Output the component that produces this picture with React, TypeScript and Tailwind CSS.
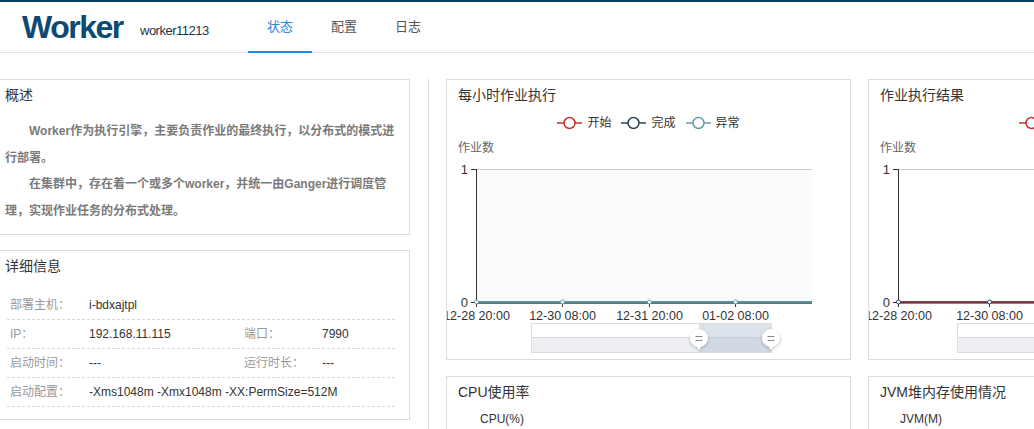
import React from 'react';

type Series = { color: string; width: number; dy?: number };

interface TrendChartProps {
  width: number;
  plotRight: number;
  ticks: { x: number; label: string }[];
  series: Series[];
  markerStroke: string;
  slider: { x1: number; x2: number; sel: number };
  shaded?: boolean;
  id: string;
}

// echarts-like line chart, drawn flat
function TrendChart({ width, plotRight, ticks, series, markerStroke, slider, shaded, id }: TrendChartProps) {
  const top = 13;
  const base = 146;
  return (
    <svg width={width} height={202} className="block overflow-hidden" style={{ fontFamily: 'Liberation Sans, Noto Sans CJK SC, sans-serif' }}>
      <defs>
        <filter id={`${id}-sh`} x="-50%" y="-50%" width="200%" height="200%">
          <feDropShadow dx="0" dy="1" stdDeviation="1.4" floodColor="#000" floodOpacity="0.3" />
        </filter>
      </defs>
      {shaded && <rect x={29} y={top} width={plotRight - 29} height={base - top} fill="#fbfbfb" />}
      <line x1={29} y1={top + 0.5} x2={plotRight} y2={top + 0.5} stroke="#ccc" />
      <line x1={29.5} y1={top} x2={29.5} y2={base} stroke="#333" />
      <line x1={24} y1={top + 0.5} x2={29} y2={top + 0.5} stroke="#333" />
      <line x1={24} y1={base + 0.5} x2={29} y2={base + 0.5} stroke="#333" />
      <text x={21} y={17.5} fontSize={13} textAnchor="end" fill="#333">1</text>
      <text x={21} y={150.5} fontSize={13} textAnchor="end" fill="#333">0</text>
      <line x1={29} y1={base + 0.5} x2={plotRight} y2={base + 0.5} stroke="#333" />
      {series.map((s, i) => (
        <line key={i} x1={29} y1={base + (s.dy ?? 0)} x2={plotRight} y2={base + (s.dy ?? 0)} stroke={s.color} strokeWidth={s.width} />
      ))}
      {ticks.map((t) => (
        <g key={t.label}>
          <line x1={t.x + 0.5} y1={base} x2={t.x + 0.5} y2={base + 5} stroke="#333" />
          <circle cx={t.x + 0.5} cy={base} r={2} fill="#fff" stroke={markerStroke} strokeWidth={1} />
          <text x={t.x + 0.5} y={163.5} fontSize={12.5} textAnchor="middle" fill="#333">{t.label}</text>
        </g>
      ))}
      {/* data zoom slider */}
      <rect x={slider.x1 + 0.5} y={167.5} width={slider.x2 - slider.x1} height={14} fill="#fff" />
      <rect x={slider.x1 + 0.5} y={181.5} width={slider.x2 - slider.x1} height={15} fill="#eceef1" />
      <line x1={slider.x1} y1={181.5} x2={slider.x2} y2={181.5} stroke="#d8dce2" />
      <rect x={slider.sel} y={167.5} width={slider.x2 - slider.sel} height={29} fill="#a7b7cc" fillOpacity={0.4} />
      <rect x={slider.x1 + 0.5} y={167.5} width={slider.x2 - slider.x1} height={29} fill="none" stroke="#ddd" />
      {[slider.sel, slider.x2].map((hx) => (
        <g key={hx}>
          <path d={`M${hx - 9} 182 a9 9 0 1 1 18 0 a9 9 0 0 1 -7 8.7 l-2 3.3 l-2 -3.3 a9 9 0 0 1 -7 -8.7 z`} fill="#fff" filter={`url(#${id}-sh)`} />
          <line x1={hx - 3.5} y1={180.5} x2={hx + 3.5} y2={180.5} stroke="#8a8a8a" />
          <line x1={hx - 3.5} y1={184.5} x2={hx + 3.5} y2={184.5} stroke="#8a8a8a" />
        </g>
      ))}
    </svg>
  );
}

function LegendItem({ color, label }: { color: string; label: string }) {
  return (
    <div className="flex items-center">
      <svg width={25} height={14} className="block">
        <line x1={0} y1={7} x2={25} y2={7} stroke={color} strokeWidth={1.5} />
        <circle cx={12.5} cy={7} r={5.5} fill="#fff" stroke={color} strokeWidth={1.5} />
      </svg>
      <span className="ml-[5px] text-[12px] text-[#333]">{label}</span>
    </div>
  );
}

function Panel({ title, className, children }: { title: string; className?: string; children?: React.ReactNode }) {
  return (
    <div className={`border border-[#dcdcdc] bg-white px-[11px] pt-[5px] overflow-hidden shrink-0 ${className ?? ''}`}>
      <div className="text-[14px] leading-[20px] text-[#333]">{title}</div>
      {children}
    </div>
  );
}

const details: [string, string, string?, string?][] = [
  ['部署主机：', 'i-bdxajtpl'],
  ['IP：', '192.168.11.115', '端口：', '7990'],
  ['启动时间：', '---', '运行时长：', '---'],
  ['启动配置：', '-Xms1048m -Xmx1048m -XX:PermSize=512M'],
];

export default function App() {
  return (
    <div className="w-[1034px] h-[429px] overflow-hidden bg-white text-[#333] font-['Liberation_Sans','Noto_Sans_CJK_SC',sans-serif]">
      {/* header */}
      <header className="h-[53px] border-t-2 border-t-[#0a3b60] border-b border-b-[#e4e4e4] flex items-start pl-[22px]">
        <div className="w-[118px] h-[50px] leading-[50px] text-[32px] font-bold tracking-[-1.5px] text-[#0d4a73]">Worker</div>
        <div className="w-[108px] pt-[21px] leading-[16px] text-[13px] tracking-[-0.5px] text-[#1f3447]">worker11213</div>
        <div className="flex">
          {['状态', '配置', '日志'].map((t, i) => (
            <div
              key={t}
              className={`w-[64px] h-[51px] leading-[50px] text-center text-[13px] ${
                i === 0 ? 'text-[#2a8ad8] border-b-2 border-[#1e88e5]' : 'text-[#555]'
              }`}
            >
              {t}
            </div>
          ))}
        </div>
      </header>

      <main className="flex items-start pt-[26px]">
        {/* left column */}
        <div className="-ml-[7px] w-[417px] shrink-0 flex flex-col gap-[15px]">
          <Panel title="概述" className="h-[156px] pr-[8px]">
            <div className="mt-[13px] w-[391px] text-[12px] font-bold leading-[26.6px] text-[#7a7a7a]">
              <p className="indent-[24px]">Worker作为执行引擎，主要负责作业的最终执行，以分布式的模式进行部署。</p>
              <p className="indent-[24px]">在集群中，存在着一个或多个worker，并统一由Ganger进行调度管理，实现作业任务的分布式处理。</p>
            </div>
          </Panel>
          <Panel title="详细信息" className="h-[170px]">
            <div className="mt-[15px] ml-[2px] w-[388px] text-[12px]">
              {details.map(([l1, v1, l2, v2]) => (
                <div key={l1} className="h-[29px] border-b border-dashed border-[#d8d8d8] flex items-center pl-[3px]">
                  <span className="w-[79px] text-[#999]">{l1}</span>
                  <span className={l2 ? 'w-[155px] text-[#333]' : 'text-[#333]'}>{v1}</span>
                  {l2 && <span className="w-[78px] text-[#999]">{l2}</span>}
                  {v2 && <span className="text-[#333]">{v2}</span>}
                </div>
              ))}
            </div>
          </Panel>
        </div>

        {/* right side */}
        <div className="ml-[18px] border-l border-[#dcdcdc] pl-[17px] flex flex-col gap-[16px] h-[400px]">
          <div className="flex gap-[17px]">
            <Panel title="每小时作业执行" className="w-[405px] h-[281px]">
              <div className="mt-[8px] h-[20px] flex justify-center gap-[10px]">
                <LegendItem color="#c23531" label="开始" />
                <LegendItem color="#2f4554" label="完成" />
                <LegendItem color="#61a0a8" label="异常" />
              </div>
              <div className="mt-[7px] leading-[16px] text-[12px] text-[#666]">作业数</div>
              <div className="-mx-[11px]">
                <TrendChart
                  id="hourly"
                  width={403}
                  plotRight={365}
                  shaded
                  markerStroke="#61a0a8"
                  ticks={[
                    { x: 29, label: '12-28 20:00' },
                    { x: 115, label: '12-30 08:00' },
                    { x: 202, label: '12-31 20:00' },
                    { x: 288, label: '01-02 08:00' },
                  ]}
                  series={[
                    { color: '#2f4554', width: 2.5, dy: 0.5 },
                    { color: '#61a0a8', width: 1.6, dy: 0 },
                  ]}
                  slider={{ x1: 84, x2: 324, sel: 252 }}
                />
              </div>
            </Panel>
            <Panel title="作业执行结果" className="w-[421px] h-[281px]">
              <div className="mt-[8px] h-[20px] flex justify-center gap-[10px]">
                <LegendItem color="#c23531" label="成功" />
                <LegendItem color="#2f4554" label="失败" />
              </div>
              <div className="mt-[7px] leading-[16px] text-[12px] text-[#666]">作业数</div>
              <div className="-mx-[11px]">
                <TrendChart
                  id="result"
                  width={419}
                  plotRight={381}
                  markerStroke="#2f4554"
                  ticks={[
                    { x: 29, label: '12-28 20:00' },
                    { x: 120, label: '12-30 08:00' },
                    { x: 211, label: '12-31 20:00' },
                    { x: 302, label: '01-02 08:00' },
                  ]}
                  series={[
                    { color: '#c23531', width: 2.5, dy: 0.5 },
                    { color: '#4a3f55', width: 1.5, dy: 0 },
                  ]}
                  slider={{ x1: 88, x2: 338, sel: 263 }}
                />
              </div>
            </Panel>
          </div>
          <div className="flex gap-[17px]">
            <Panel title="CPU使用率" className="w-[405px] h-[200px]">
              <div className="mt-[9px] ml-[22px] leading-[16px] text-[12px] text-[#333]">CPU(%)</div>
            </Panel>
            <Panel title="JVM堆内存使用情况" className="w-[421px] h-[200px]">
              <div className="mt-[9px] ml-[20px] leading-[16px] text-[12px] text-[#333]">JVM(M)</div>
            </Panel>
          </div>
        </div>
      </main>
    </div>
  );
}
